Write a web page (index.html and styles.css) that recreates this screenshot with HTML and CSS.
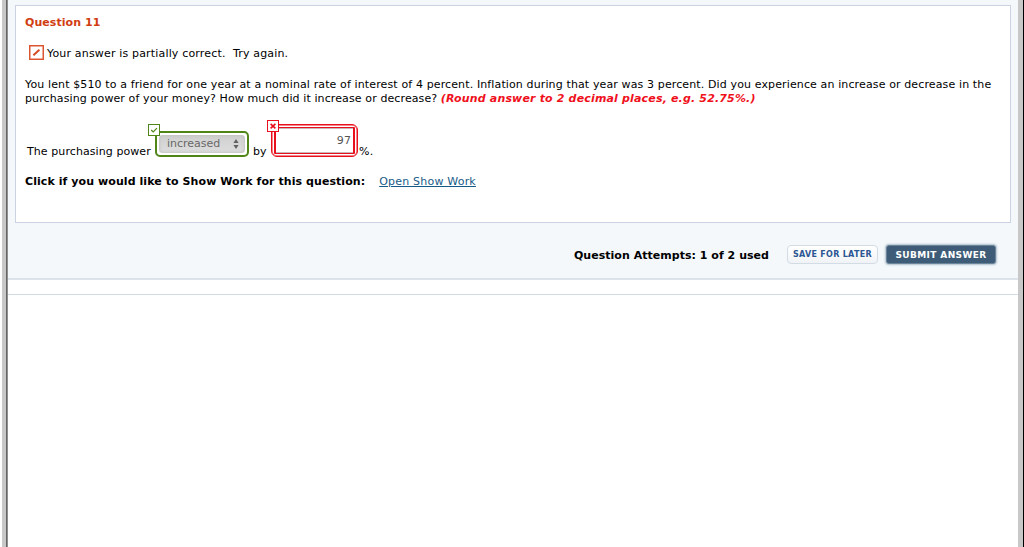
FILE: index.html
```html
<!DOCTYPE html>
<html lang="en">
  <head>
    <meta charset="utf-8">
    <title>Question 11</title>
    <link rel="stylesheet" href="styles.css">
  </head>
  <body>
    <div class="window">
      <div class="panel">
        <div class="question">
          <h1>Question 11</h1>
          <div class="feedback">
            <svg class="partial" width="15" height="15" viewBox="0 0 15 15">
              <rect x=".75" y=".75" width="13.5" height="13.5" fill="#fff" stroke="#dc5633" stroke-width="1.5"/>
              <path d="M4.4 10.2L10.4 4.8" stroke="#d54a24" stroke-width="2" fill="none"/>
            </svg>
            <span>Your answer is partially correct.&nbsp; Try again.</span>
          </div>
          <div class="text">
            <div class="line1">You lent $510 to a friend for one year at a nominal rate of interest of 4 percent. Inflation during that year was 3 percent. Did you experience an increase or decrease in the</div>
            <div class="line2"><span class="ask">purchasing power of your money? How much did it increase or decrease?</span> <em>(Round answer to 2 decimal places, e.g. 52.75%.)</em></div>
          </div>
          <div class="answer">
            <span class="label">The purchasing power</span>
            <div class="correct">
              <svg class="mark" width="12" height="12" viewBox="0 0 12 12">
                <rect x=".5" y=".5" width="11" height="11" fill="#fff" stroke="#4f8617"/>
                <path d="M3.2 6L5.2 8L9 4.2" stroke="#4f8617" stroke-width="1.2" fill="none"/>
              </svg>
              <div class="select">
                <span>increased</span>
                <svg width="6" height="10" viewBox="0 0 6 10">
                  <path d="M3 0L5.6 4H.4zM3 10L.4 6H5.6z" fill="#626262"/>
                </svg>
              </div>
            </div>
            <span class="by">by</span>
            <div class="wrong">
              <svg class="mark" width="12" height="12" viewBox="0 0 12 12">
                <rect x=".5" y=".5" width="11" height="11" fill="#fff" stroke="#e8101c"/>
                <path d="M3.6 3.8L8.4 8.4M8.4 3.8L3.6 8.4" stroke="#e8101c" stroke-width="1.6"/>
              </svg>
              <div class="value">97</div>
            </div>
            <span class="percent">%.</span>
          </div>
          <div class="work">
            <b>Click if you would like to Show Work for this question:</b>
            <a href="#">Open Show Work</a>
          </div>
        </div>
        <div class="actions">
          <b class="attempts">Question Attempts: 1 of 2 used</b>
          <button class="save">SAVE FOR LATER</button>
          <button class="submit">SUBMIT ANSWER</button>
        </div>
      </div>
      <div class="strip"></div>
    </div>
  </body>
</html>
```
FILE: styles.css
```css
* {
  box-sizing: border-box;
}
body {
  margin: 0;
  height: 547px;
  overflow: hidden;
  background: #fff;
  color: #000;
  font: 11px/14px Verdana, "DejaVu Sans", sans-serif;
  white-space: nowrap;
}
.window {
  height: 547px;
  margin-left: 2px;
  border-left: 4px solid #c8c8c8;
  border-right: 1px solid #000;
  box-shadow: inset 1px 0 #666, inset 2px 0 #909090, inset -5px 0 #c8c8c8;
  padding: 0 5px 0 2px;
}
.panel {
  height: 280px;
  padding: 5px 7px 0 7px;
  background: #f4f8fb;
  border-bottom: 2px solid #dde3ea;
}
.strip {
  height: 15px;
  border-bottom: 1px solid #d0dbe4;
}
.question {
  height: 218px;
  padding: 10px 9px 0;
  background: #fff;
  border: 1px solid #cbd3e2;
}
h1 {
  margin: 0;
  color: #d13d12;
  font-size: 11px;
  line-height: 14px;
  letter-spacing: .06px;
}
.feedback {
  display: flex;
  height: 15px;
  margin: 15px 0 0 4px;
  letter-spacing: .17px;
}
.partial {
  margin-right: 3px;
}
.feedback span {
  line-height: 17px;
}
.text {
  margin-top: 18px;
}
.line1 {
  letter-spacing: .125px;
}
.ask {
  letter-spacing: .11px;
}
em {
  color: #f0101c;
  font-weight: bold;
  letter-spacing: .165px;
}
.answer {
  display: flex;
  align-items: flex-start;
  height: 40px;
  margin: 17px 0 0 2px;
}
.label, .by, .percent {
  margin-top: 22px;
}
.label {
  width: 128px;
  letter-spacing: .08px;
}
.correct {
  position: relative;
  width: 94px;
  height: 26px;
  margin-top: 8px;
  padding: 2px;
  border: 2px solid #4f8617;
  border-radius: 5px;
}
.mark {
  position: absolute;
  left: -9px;
  top: -9px;
}
.select {
  display: flex;
  align-items: center;
  justify-content: space-between;
  height: 18px;
  padding: 0 6px 0 8px;
  border-radius: 4px;
  background: linear-gradient(#cfcfcf, #dedede);
  box-shadow: inset 0 0 3px 1px #c5c5c5;
  color: #686868;
}
.by {
  margin-left: 4px;
  width: 18px;
}
.wrong {
  position: relative;
  width: 87px;
  height: 33px;
  margin-top: 1px;
  padding: 2px;
  border: 1px solid #e8101c;
  border-radius: 6px;
  box-shadow: inset 0 0 0 .5px #e8101c;
}
.wrong .mark {
  left: -5px;
  top: -5px;
}
.value {
  height: 27px;
  padding: 0 2px;
  border: 1px solid #e8101c;
  border-left-width: 2px;
  border-right-width: 2px;
  border-radius: 1px;
  box-shadow: inset 0 1px #c8b8b8, inset 0 -1px #c8b8b8;
  color: #555;
  line-height: 26px;
  text-align: right;
  letter-spacing: .1px;
}
.percent {
  margin-left: 1px;
  letter-spacing: .3px;
}
.work {
  display: flex;
  margin-top: 12px;
}
.work b {
  letter-spacing: .075px;
}
.work a {
  margin-left: 14px;
  color: #165b88;
  letter-spacing: .2px;
}
.actions {
  display: flex;
  align-items: center;
  justify-content: flex-end;
  height: 24px;
  margin-top: 20px;
  padding-right: 15px;
}
.attempts {
  padding-top: 1px;
  letter-spacing: .03px;
}
button {
  font-family: Verdana, "DejaVu Sans", sans-serif;
  font-weight: bold;
  padding: 0;
  white-space: nowrap;
}
.save {
  width: 91px;
  height: 19px;
  margin: -1px 8px 0 18px;
  border: 1px solid #d3dce5;
  border-radius: 4px;
  background: linear-gradient(#fff, #f0f3f6);
  color: #2b5693;
  font-size: 8px;
  letter-spacing: .29px;
}
.submit {
  width: 110px;
  height: 19px;
  margin-top: -1px;
  border: 1px solid #6a8499;
  border-radius: 3px;
  background: #3e5c77;
  box-shadow: 0 0 2px 1px #b0c0cc;
  color: #fff;
  font-size: 9px;
  letter-spacing: .37px;
}
```
